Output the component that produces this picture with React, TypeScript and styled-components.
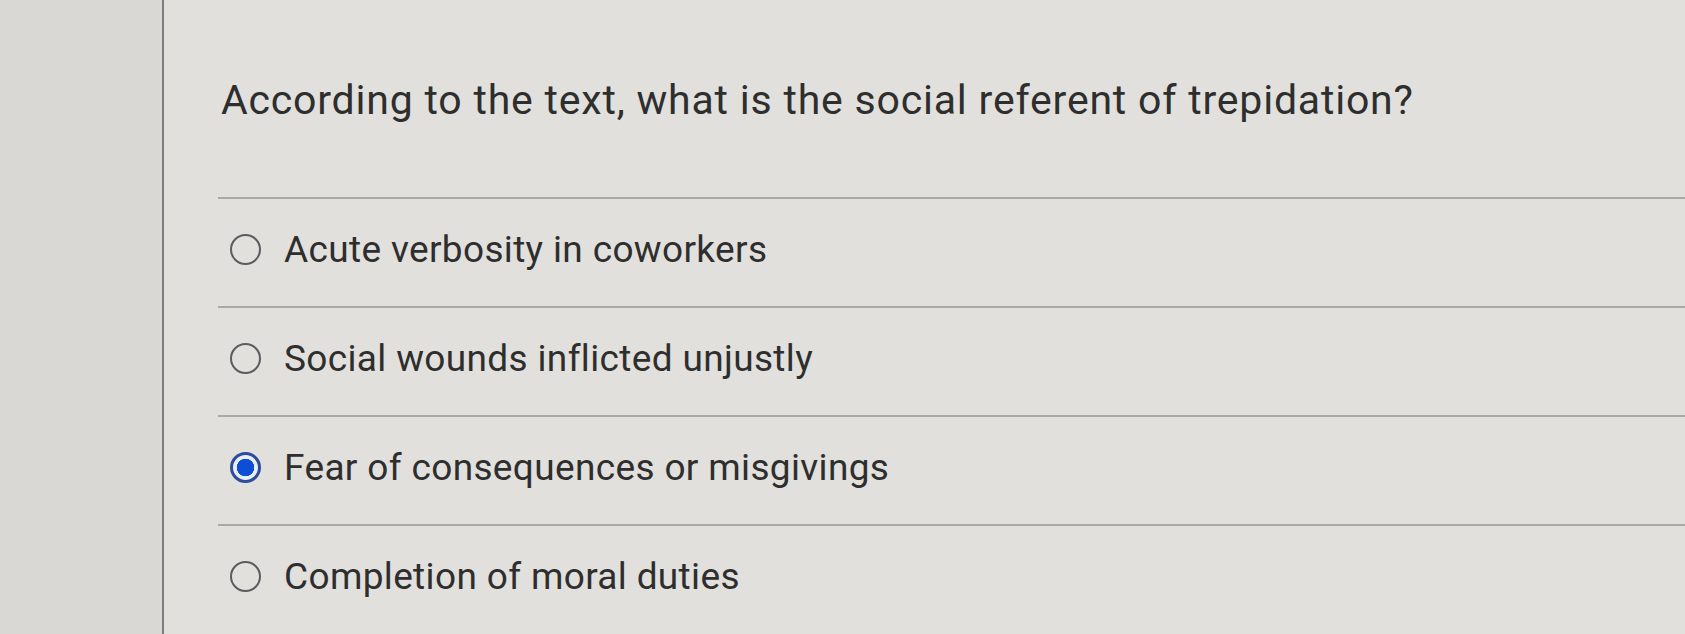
import React from "react";
import styled, { createGlobalStyle } from "styled-components";

const GlobalStyle = createGlobalStyle`
  html, body {
    margin: 0;
    padding: 0;
    background: #e0dfdb;
  }
  body {
    font-family: Roboto, "Noto Sans", "Liberation Sans", sans-serif;
  }
`;

const Page = styled.div`
  display: flex;
  width: 100%;
  height: 634px;
  overflow: hidden;
`;

const SidePanel = styled.div`
  width: 162px;
  flex-shrink: 0;
  background-color: #d9d8d4;
  border-right: 2px solid #7d7d7b;
`;

const Content = styled.div`
  flex: 1;
  padding: 76px 0 0 54px;
  background-color: #e1e0dc;
`;

const Question = styled.h1`
  margin: 0 0 73px 3px;
  font-size: 41px;
  line-height: 48px;
  letter-spacing: 0.8px;
  font-weight: 400;
  color: #2e2e2e;
  white-space: nowrap;
`;

const OptionList = styled.div`
  display: flex;
  flex-direction: column;
`;

const Option = styled.label`
  display: flex;
  align-items: center;
  gap: 23px;
  height: 101px;
  padding: 0 0 6px 12px;
  box-sizing: content-box;
  border-top: 2px solid #aaa9a6;
  cursor: pointer;
`;

const Radio = styled.span<{ $checked?: boolean }>`
  width: 31px;
  height: 31px;
  flex-shrink: 0;
  box-sizing: border-box;
  border-radius: 50%;
  border: ${(p) => (p.$checked ? "3px solid #2c4c9c" : "2.5px solid #5b5b5b")};
  background: ${(p) =>
    p.$checked
      ? "radial-gradient(circle, #0c4fd6 0 8.5px, #e9edf5 9px)"
      : "transparent"};
`;

const OptionText = styled.span`
  font-size: 37px;
  line-height: normal;
  letter-spacing: 0.35px;
  color: #2e2e2e;
  white-space: nowrap;
`;

const options = [
  "Acute verbosity in coworkers",
  "Social wounds inflicted unjustly",
  "Fear of consequences or misgivings",
  "Completion of moral duties",
];

export default function App() {
  const selected = 2;
  return (
    <>
      <GlobalStyle />
      <Page>
        <SidePanel />
        <Content>
          <Question>
            According to the text, what is the social referent of trepidation?
          </Question>
          <OptionList>
            {options.map((text, index) => (
              <Option key={index}>
                <Radio $checked={index === selected} />
                <OptionText>{text}</OptionText>
              </Option>
            ))}
          </OptionList>
        </Content>
      </Page>
    </>
  );
}
